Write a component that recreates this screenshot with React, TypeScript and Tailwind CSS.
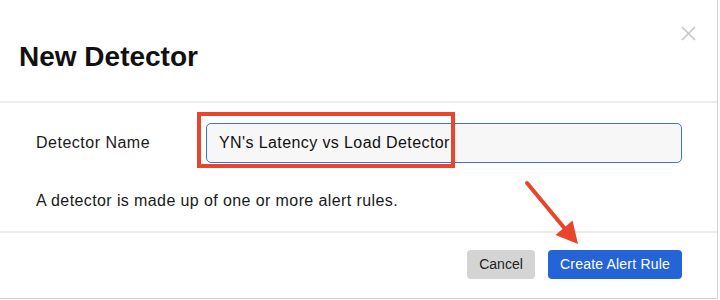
import React from "react";

const font = { fontFamily: '"Liberation Sans", Arial, sans-serif' };

function CloseIcon() {
  return (
    <svg width="15" height="15" viewBox="0 0 15 15" fill="none">
      <path d="M1 1 L14 14 M14 1 L1 14" stroke="#c6c6c6" strokeWidth="1.6" />
    </svg>
  );
}

// red annotation arrow pointing at the primary button
function Arrow() {
  return (
    <svg className="absolute left-0 top-0 pointer-events-none" width="720" height="300">
      <line x1="527" y1="183" x2="566" y2="230" stroke="#e8452c" strokeWidth="4" strokeLinecap="round" />
      <polygon points="578,244 555.5,235 572.5,220.5" fill="#e8452c" />
    </svg>
  );
}

export default function App() {
  return (
    <div className="relative w-[720px] h-[300px] bg-white overflow-hidden" style={font}>
      <div className="w-[718px] h-[299px] bg-white border-r border-b border-[#d2d2d2] flex flex-col">
        <div className="relative h-[103px] pl-[19px] pt-[40px] border-b-2 border-[#ececec]">
          <h1 className="text-[28px] leading-[34px] font-bold text-[#111]">New Detector</h1>
          <button className="absolute right-[21px] top-[26px]">
            <CloseIcon />
          </button>
        </div>

        <div className="pt-[20px] pl-[36px] pr-[35px] pb-[18px] border-b-2 border-[#ececec]">
          <div className="flex items-center">
            <label className="w-[170px] text-[16px] tracking-[0.5px] text-[#1a1a1a]">Detector Name</label>
            <div className="relative flex-1">
              <div className="h-[40px] rounded-[5px] border border-[#3d74d9] bg-[#f7f7f8] flex items-center pl-[12px] text-[16px] tracking-[0.4px] text-[#111]">
                YN's Latency vs Load Detector
              </div>
              <div className="absolute -left-[9px] -top-[11px] w-[258px] h-[56px] border-4 border-[#e8452c]" />
            </div>
          </div>
          <p className="mt-[26px] text-[16px] leading-[24px] tracking-[0.4px] text-[#1a1a1a]">
            A detector is made up of one or more alert rules.
          </p>
        </div>

        <div className="flex justify-end gap-[13px] pt-[17px] pr-[35px]">
          <button className="h-[29px] w-[68px] rounded-[4px] bg-[#d4d4d4] text-[14px] text-[#222]">Cancel</button>
          <button className="h-[29px] w-[134px] rounded-[4px] bg-[#2564d6] text-[14px] tracking-[0.2px] text-white">
            Create Alert Rule
          </button>
        </div>
      </div>
      <Arrow />
    </div>
  );
}
